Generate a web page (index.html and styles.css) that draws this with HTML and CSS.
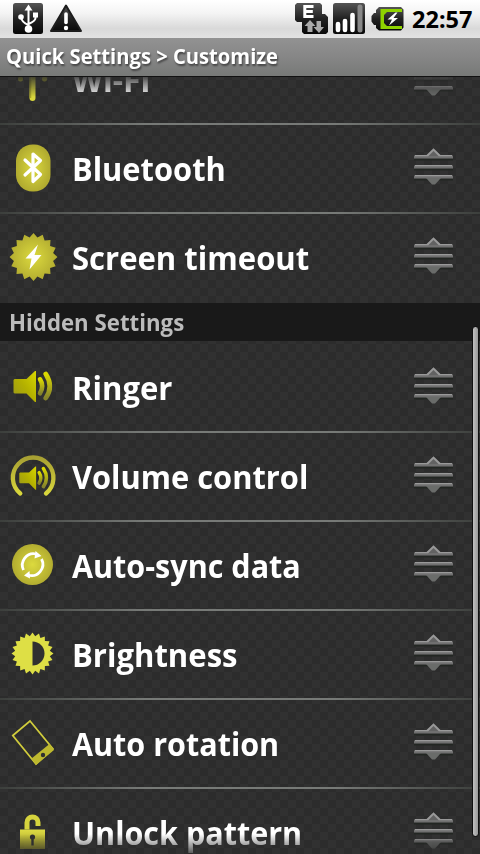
FILE: index.html
```html
<!DOCTYPE html>
<html lang="en">
<head>
<meta charset="utf-8">
<title>Quick Settings</title>
<link rel="stylesheet" href="styles.css">
</head>
<body>
<svg class="defs" width="0" height="0" aria-hidden="true">
  <defs>
    <radialGradient id="lime"><stop offset="0" stop-color="#dcda3e"/><stop offset="1" stop-color="#b2ac30"/></radialGradient>
    <linearGradient id="sound" x1="0" y1="1" x2="1" y2="0"><stop offset="0" stop-color="#99961c"/><stop offset=".5" stop-color="#b3b000"/><stop offset="1" stop-color="#d8d600"/></linearGradient>
    <linearGradient id="wave" x1="0" y1="0" x2="0" y2="1"><stop offset="0" stop-color="#dcda00"/><stop offset="1" stop-color="#85832c"/></linearGradient>
    <linearGradient id="ring" x1="0" y1="0" x2="0" y2="1"><stop offset="0" stop-color="#a7a033"/><stop offset="1" stop-color="#d8d63c"/></linearGradient>
    <linearGradient id="lock" x1="0" y1="0" x2="0" y2="1"><stop offset="0" stop-color="#dedc44"/><stop offset="1" stop-color="#a09a28"/></linearGradient>
    <linearGradient id="black" x1="0" y1="0" x2="0" y2="1"><stop offset="0" stop-color="#555"/><stop offset=".5" stop-color="#222"/><stop offset="1" stop-color="#080808"/></linearGradient>
    <symbol id="grip" viewBox="0 0 40 40">
      <path d="M0 11.500h39M0 21.500h39M0 31.500h39" stroke="#222622" stroke-width="2"/>
      <path d="M1 7h11.500l7-6.800L26.500 7H38l1 1.800H0zM1 17h37l1 1.800H0zM1 27h37l1 1.800H0z" fill="#999"/>
      <path d="M14 8.500 19.500 3l5.500 5.500z" fill="#626262"/>
      <path d="M0 8.800h39v1.700H0zM0 18.800h39v1.700H0zM0 28.800h39v1.700H0z" fill="#707070"/>
      <path d="M12 30h15l-6 6.500h-3z" fill="#6a6c6a"/>
    </symbol>
    <symbol id="speaker" viewBox="0 0 40 32">
      <path d="M2 8.500h12L22.500.500h1v31h-1L14 23H2l-1-1V9.500z" fill="url(#sound)"/>
      <path d="M27.500 8.800q4.500 7 0 14" fill="none" stroke="url(#wave)" stroke-width="4.600" stroke-linecap="round"/>
      <path d="M33.300 3.500q8 12.500 0 24" fill="none" stroke="url(#wave)" stroke-width="4.800" stroke-linecap="round"/>
    </symbol>
  </defs>
</svg>
<div class="screen">
  <header class="status">
    <svg class="ico-usb" width="30" height="32" viewBox="0 0 30 32">
      <rect width="30" height="31" rx="2.500" fill="url(#black)"/>
      <path d="M15.500 4v20M8.500 15q0 4 7 7M22.500 12v3q0 3-7 6" fill="none" stroke="#fff" stroke-width="2"/>
      <path d="M15.500 1.500l4 6h-8zM20 9.500h5v5h-5z" fill="#fff"/>
      <circle cx="8" cy="14" r="2.800" fill="#fff"/><circle cx="15.500" cy="26" r="3.800" fill="#fff"/>
    </svg>
    <svg class="ico-warn" width="34" height="30" viewBox="0 0 34 30">
      <path d="M17 1.500 32 27H2z" fill="url(#black)" stroke="#1c1c1c" stroke-width="2" stroke-linejoin="round"/>
      <path d="M17 10v8.500" stroke="#fff" stroke-width="3.600" stroke-linecap="round"/><circle cx="17" cy="24" r="2.200" fill="#fff"/>
    </svg>
    <span class="grow"></span>
    <svg class="ico-edge" width="33" height="32" viewBox="0 0 33 32">
      <path d="M2 0h23l2 2v9h3l3 3v15l-2 2H9l-2-2V19H2l-2-2V2z" fill="url(#black)"/>
      <path d="M18.500 3.500H9.800v10h8.700M9.800 8.500h8" fill="none" stroke="#fff" stroke-width="3"/>
      <path d="M15 17l5.500 6H17.500v6h-5v-6H9.500zM24 30l-5.500-6h3v-6h4.500v6h3z" fill="#aaa"/>
    </svg>
    <svg class="ico-signal" width="32" height="32" viewBox="0 0 32 32">
      <rect width="32" height="31" rx="2.500" fill="url(#black)"/>
      <path d="M5 21v6M12 18v9M19.500 12v15" stroke="#fff" stroke-width="4.600" stroke-linecap="round"/>
      <path d="M27 4v23" stroke="#888" stroke-width="5" stroke-linecap="round"/>
    </svg>
    <svg class="ico-battery" width="33" height="24" viewBox="0 0 33 24">
      <path d="M8 0h22l2.500 2.500v18L30 23.500H8l-3-2.500v-3H3l-2.500-3.500V9L3 6h2V3z" fill="url(#black)"/>
      <path d="M9.500 2H31v3H16l-3 3v8l3 3h15v3H9.500z" fill="#8fd400"/>
      <path d="M24.500 5.500l-8 7h4.500l-3 6 9-7.500h-4.500l4-5.500z" fill="#fff"/>
    </svg>
    <time class="clock">22:57</time>
  </header>
  <h1 class="title"><span class="title-text">Quick Settings &gt; Customize</span></h1>
  <main class="view">
    <div class="list">
      <div class="row clipped">
        <span class="icon"><svg width="50" height="50" viewBox="0 3 50 50"><path d="M24.500 20v27" stroke="#d8d63c" stroke-width="6" stroke-linecap="round"/><path d="M22.500 20v27" stroke="#aaa72a" stroke-width="1.500"/><circle cx="12.500" cy="28" r="2.500" fill="#b8b52c"/><circle cx="36.500" cy="28" r="2.500" fill="#b8b52c"/></svg></span>
        <span class="label"><span class="t wifi">Wi-Fi</span></span><svg class="grip" width="40" height="40"><use href="#grip"/></svg>
      </div>
      <div class="row">
        <span class="icon"><svg width="50" height="50" viewBox="0 0 50 50"><rect x="8" y="1.500" width="34.500" height="47" rx="16.500" fill="url(#lime)"/><path d="M17 17 32.500 31.500 25 38.500V11l7.500 6.500L17 32" fill="none" stroke="#fff" stroke-width="3.200" stroke-linecap="round" stroke-linejoin="round"/></svg></span>
        <span class="label"><span class="t">Bluetooth</span></span><svg class="grip" width="40" height="40"><use href="#grip"/></svg>
      </div>
      <div class="row last">
        <span class="icon"><svg width="50" height="50" viewBox="-25.500 -25 50 50"><polygon fill="url(#lime)" points="0,-24 3.900,-19.600 9.200,-22.200 11.100,-16.600 17,-17 16.600,-11.100 22.200,-9.200 19.600,-3.900 24,0 19.600,3.900 22.200,9.200 16.600,11.100 17,17 11.100,16.600 9.200,22.200 3.900,19.600 0,24 -3.900,19.600 -9.200,22.200 -11.100,16.600 -17,17 -16.600,11.100 -22.200,9.200 -19.600,3.900 -24,0 -19.600,-3.900 -22.200,-9.200 -16.600,-11.100 -17,-17 -11.100,-16.600 -9.200,-22.200 -3.900,-19.600"/><path d="M4.500-12.500-8 1.500h6L-4 12.500 8-2H1z" fill="#fff"/></svg></span>
        <span class="label"><span class="t wide">Screen timeout</span></span><svg class="grip" width="40" height="40"><use href="#grip"/></svg>
      </div>
      <h2 class="section"><span class="section-text">Hidden Settings</span></h2>
      <div class="row">
        <span class="icon"><svg width="50" height="50" viewBox="0 0 50 50"><use href="#speaker" x="4.500" y="8.500" width="40" height="32"/></svg></span>
        <span class="label"><span class="t wide">Ringer</span></span><svg class="grip" width="40" height="40"><use href="#grip"/></svg>
      </div>
      <div class="row">
        <span class="icon"><svg width="50" height="50" viewBox="0 0 50 50"><path d="M12.300 42.500A20.300 20.300 0 1 1 38 42.500" fill="none" stroke="url(#ring)" stroke-width="4.300" stroke-linecap="round"/><use href="#speaker" x="10.500" y="15" width="30" height="24"/></svg></span>
        <span class="label"><span class="t">Volume control</span></span><svg class="grip" width="40" height="40"><use href="#grip"/></svg>
      </div>
      <div class="row">
        <span class="icon"><svg width="50" height="50" viewBox="0 0 50 50"><circle cx="24.500" cy="24.500" r="20.500" fill="url(#lime)"/><path d="M15.500 30A11.300 11.300 0 0 1 28 14M33.500 19A11.300 11.300 0 0 1 20 35" fill="none" stroke="#fff" stroke-width="2.800"/><path d="M27.500 11 33.500 16 26.500 18.500zM21.500 31 16 35.500l6 3z" fill="#fff"/></svg></span>
        <span class="label"><span class="t narrow">Auto-sync data</span></span><svg class="grip" width="40" height="40"><use href="#grip"/></svg>
      </div>
      <div class="row">
        <span class="icon"><svg width="50" height="50" viewBox="-24.500 -24.500 50 50"><polygon fill="#dedf45" points="0,-21 2.700,-17.300 6.500,-20 7.900,-15.600 12.300,-17 12.400,-12.400 17,-12.300 15.600,-7.900 20,-6.500 17.300,-2.700 21,0 17.300,2.700 20,6.500 15.600,7.900 17,12.300 12.400,12.400 12.300,17 7.900,15.600 6.500,20 2.700,17.300 0,21 -2.700,17.300 -6.500,20 -7.900,15.600 -12.300,17 -12.400,12.400 -17,12.300 -15.600,7.900 -20,6.500 -17.300,2.700 -21,0 -17.300,-2.700 -20,-6.500 -15.600,-7.900 -17,-12.300 -12.400,-12.400 -12.300,-17 -7.900,-15.600 -6.500,-20 -2.700,-17.300"/><path d="M0-12A12 12 0 0 1 0 12z" fill="#303030"/></svg></span>
        <span class="label"><span class="t wide">Brightness</span></span><svg class="grip" width="40" height="40"><use href="#grip"/></svg>
      </div>
      <div class="row">
        <span class="icon"><svg width="50" height="50" viewBox="0 0 50 50"><path d="M4.800 17.500 22 3 45 31 28 46z" fill="none" stroke="#d0cc3c" stroke-width="1.700"/><path d="M23.500 40.500 41.500 26l4.500 6-18 15z" fill="#bdb82f"/><circle cx="35" cy="37" r="2.200" fill="#303030"/></svg></span>
        <span class="label"><span class="t narrow">Auto rotation</span></span><svg class="grip" width="40" height="40"><use href="#grip"/></svg>
      </div>
      <div class="row">
        <span class="icon"><svg width="50" height="50" viewBox="0 2.500 50 50"><path d="M19 25v-7a5.500 5.500 0 0 1 11 0v3.500" fill="none" stroke="#d5d33d" stroke-width="5"/><rect x="12" y="25" width="25" height="19.500" fill="url(#lock)"/><circle cx="24.500" cy="32.500" r="2.600" fill="#303030"/><path d="M24.500 32v9" stroke="#303030" stroke-width="2.400"/></svg></span>
        <span class="label"><span class="t narrow">Unlock pattern</span></span><svg class="grip" width="40" height="40"><use href="#grip"/></svg>
      </div>
    </div>
    <div class="scrollbar"></div>
  </main>
</div>
</body>
</html>
```
FILE: styles.css
```css
* { box-sizing: border-box; margin: 0; }
body { width: 480px; height: 854px; overflow: hidden; font-family: "Open Sans", "Noto Sans", sans-serif; }
.defs { position: absolute; }
.screen { width: 480px; height: 854px; display: flex; flex-direction: column; }
.status { height: 38px; flex: none; display: flex; align-items: flex-start; padding-left: 13px; background: linear-gradient(#fff, #f4f4f4 35%, #d9d9d9 75%, #e2e2e2); }
.status svg { flex: none; margin-top: 3px; }
.status .ico-warn { margin: 4px 0 0 6px; }
.grow { flex: 1; }
.status .ico-signal { margin-left: 5px; }
.status .ico-battery { margin: 7px 0 0 6px; }
.clock { width: 76px; height: 38px; padding-left: 8px; font: bold 23.500px/39px "Noto Sans", sans-serif; color: #000; white-space: nowrap; }
.title { height: 39px; flex: none; padding-left: 6px; border-bottom: 1px solid #111; background: linear-gradient(#929292, #868686 50%, #777977); color: #fff; font: bold 21.300px/36px "Open Sans", sans-serif; text-shadow: 1px 2px 2px #444; white-space: nowrap; }
.title-text, .section-text, .t { display: inline-block; transform-origin: left center; }
.title-text { transform: scaleX(.947); }
.section-text { transform: scaleX(.967); }
.t { transform: scaleX(.934); }
.t.wide { transform: scaleX(.941); }
.t.narrow { transform: scaleX(.925); }
.t.wifi { transform: scaleX(.97); }
.view { flex: 1; min-height: 0; position: relative; overflow: hidden; background: conic-gradient(#2c2c2c 25%, #313131 0 50%, #2c2c2c 0 75%, #313131 0) 0 3px / 16px 16px; }
.list { height: 777px; overflow: hidden; mask-image: linear-gradient(rgba(0, 0, 0, .15), #000 20px, #000 757px, rgba(0, 0, 0, .2)); }
.row { height: 89px; padding: 0 27px 2px 8px; display: flex; align-items: center; background: linear-gradient(90deg, #3c3f3c, #777a77 30%, #777a77 70%, #3c3f3c) left bottom / 100% 2px no-repeat; }
.row.clipped { margin-top: -41px; }
.row.last { background: none; }
.icon { width: 64px; height: 50px; flex: none; margin-top: -2px; }
.icon svg { display: block; }
.label { flex: 1; color: #fff; font-weight: bold; font-size: 33px; line-height: 44px; white-space: nowrap; }
.grip { flex: none; margin: -2px -1px 0 0; }
.section { height: 38px; margin-bottom: 3px; padding-left: 9px; background: #191919; color: #bbb; font: bold 23px/38px "Open Sans", sans-serif; white-space: nowrap; }
.scrollbar { position: absolute; right: 1px; top: 249px; width: 7px; height: 511px; border: 1px solid #111; border-radius: 4px; background: linear-gradient(90deg, #c0c0c0, #999); }
```
